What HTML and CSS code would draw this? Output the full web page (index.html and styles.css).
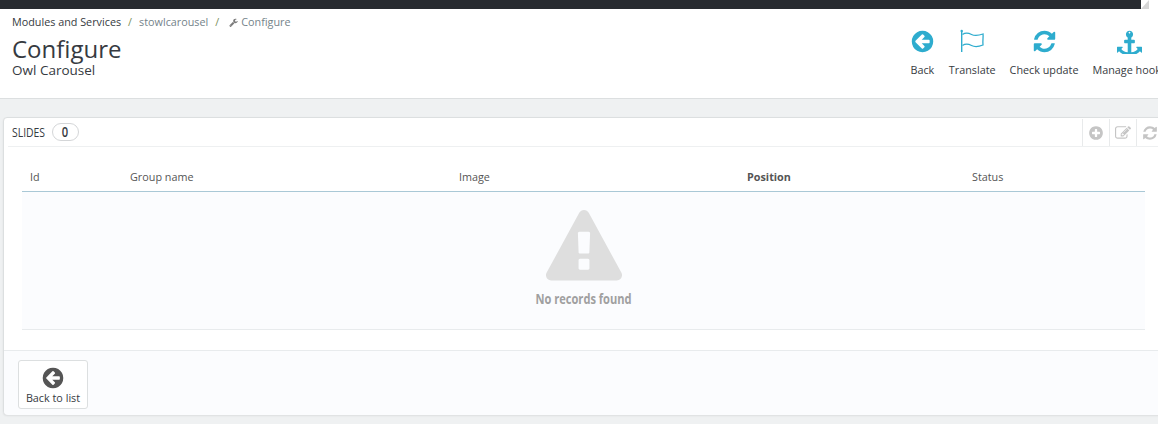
FILE: index.html
```html
<!DOCTYPE html>
<html lang="en">
<head>
<meta charset="utf-8">
<title>Configure</title>
<link rel="stylesheet" href="styles.css">
</head>
<body>
<div class="page">
  <div class="topbar"><div class="topbar-dark"></div><div class="topbar-corner"></div></div>
  <header class="head">
    <div class="head-left">
      <ul class="crumbs">
        <li class="crumb-first">Modules and Services</li>
        <li class="sep">/</li>
        <li>stowlcarousel</li>
        <li class="sep">/</li>
        <li class="crumb-icon"><svg class="wrench" viewBox="0 0 1792 1792"><path d="M448 1472q0-26-19-45t-45-19-45 19-19 45 19 45 45 19 45-19 19-45zm644-420l-682 682q-37 37-90 37-52 0-91-37l-106-108q-38-36-38-90 0-53 38-91l681-681q39 98 114.5 173.5t173.5 114.5zm634-435q0 39-23 106-47 134-164.5 217.5t-258.5 83.5q-185 0-316.5-131.5t-131.5-316.5 131.5-316.5 316.5-131.5q58 0 121.5 16.5t107.5 46.5q16 11 16 28t-16 28l-293 169v224l193 107q5-3 79-48.5t135.5-81 70.5-35.5q15 0 23.5 10t8.5 25z"/></svg>Configure</li>
      </ul>
      <h1 class="title">Configure</h1>
      <h2 class="subtitle">Owl Carousel</h2>
    </div>
    <nav class="actions">
      <a class="action">
        <svg class="action-icon" viewBox="0 0 1792 1792"><path d="M1408 960v-128q0-26-19-45t-45-19h-502l189-189q19-19 19-45t-19-45l-91-91q-18-18-45-18t-45 18l-362 362-91 91q-18 18-18 45t18 45l91 91 362 362q18 18 45 18t45-18l91-91q18-18 18-45t-18-45l-189-189h502q26 0 45-19t19-45zm256-64q0 209-103 385.5t-279.5 279.5-385.5 103-385.5-103-279.5-279.5-103-385.5 103-385.5 279.5-279.5 385.5-103 385.5 103 279.5 279.5 103 385.5z"/></svg>
        <span>Back</span>
      </a>
      <a class="action">
        <svg class="action-icon" viewBox="0 0 25 25"><circle class="flag-knob" cx="1.700" cy="2" r="1.200"/><path class="flag-pole" d="M1.700 2v21"/><path class="flag-cloth" d="M2.500 5.500c3-2 6-1.500 9 0s6 1.500 11.500-.5c.5 3-.5 5.500 0 11-5 2-8.500 2-11.500.5s-6-2-9 0"/></svg>
        <span>Translate</span>
      </a>
      <a class="action">
        <svg class="action-icon" viewBox="0 0 1792 1792"><path d="M1639 1056q0 5-1 7-64 268-268 434.5t-478 166.5q-146 0-282.5-55t-243.5-157l-129 129q-19 19-45 19t-45-19-19-45v-448q0-26 19-45t45-19h448q26 0 45 19t19 45-19 45l-137 137q71 66 161 102t187 36q134 0 250-65t186-179q11-17 53-117 8-23 30-23h192q13 0 22.5 9.5t9.500 22.500zm25-800v448q0 26-19 45t-45 19h-448q-26 0-45-19t-19-45 19-45l138-138q-148-137-349-137-134 0-250 65t-186 179q-11 17-53 117-8 23-30 23h-199q-13 0-22.5-9.5t-9.500-22.500v-7q65-268 270-434.5t480-166.5q146 0 284 55.5t245 156.500l130-129q19-19 45-19t45 19 19 45z"/></svg>
        <span>Check update</span>
      </a>
      <a class="action">
        <svg class="action-icon" viewBox="0 0 1792 1792"><path d="M960 256q0-26-19-45t-45-19-45 19-19 45 19 45 45 19 45-19 19-45zm832 1056v352q0 22-20 30-8 2-12 2-12 0-23-9l-93-93q-119 143-318.5 226.5t-429.5 83.5-429.5-83.5-318.5-226.5l-93 93q-9 9-23 9-4 0-12-2-20-8-20-30v-352q0-14 9-23t23-9h352q22 0 30 20 8 19-7 35l-100 100q67 91 189.5 153.5t271.5 82.5v-647h-192q-26 0-45-19t-19-45v-128q0-26 19-45t45-19h192v-163q-58-34-93-92.5t-35-128.500q0-106 75-181t181-75 181 75 75 181q0 70-35 128.5t-93 92.500v163h192q26 0 45 19t19 45v128q0 26-19 45t-45 19h-192v647q149-20 271.5-82.5t189.5-153.500l-100-100q-15-16-7-35 8-20 30-20h352q14 0 23 9t9 23z"/></svg>
        <span>Manage hooks</span>
      </a>
    </nav>
  </header>

  <main class="content">
    <section class="panel">
      <div class="panel-head">
        <span class="panel-title">SLIDES</span>
        <span class="badge"><span class="badge-num">0</span></span>
        <div class="tools">
          <span class="tool"><svg class="tool-icon" viewBox="0 0 1792 1792"><path d="M1344 960v-128q0-26-19-45t-45-19h-256v-256q0-26-19-45t-45-19h-128q-26 0-45 19t-19 45v256h-256q-26 0-45 19t-19 45v128q0 26 19 45t45 19h256v256q0 26 19 45t45 19h128q26 0 45-19t19-45v-256h256q26 0 45-19t19-45zm320-64q0 209-103 385.5t-279.5 279.5-385.5 103-385.5-103-279.5-279.5-103-385.5 103-385.5 279.5-279.5 385.5-103 385.5 103 279.5 279.5 103 385.5z"/></svg></span>
          <span class="tool"><svg class="tool-icon" viewBox="0 0 1792 1792"><path d="M888 1184l116-116-152-152-116 116v56h96v96h56zm440-720q-16-16-33 1l-350 350q-17 17-1 33t33-1l350-350q17-17 1-33zm80 594v190q0 119-84.5 203.5t-203.5 84.5h-832q-119 0-203.5-84.5t-84.5-203.5v-832q0-119 84.5-203.5t203.5-84.5h832q63 0 117 25 15 7 18 23 3 17-9 29l-49 49q-14 14-32 8-23-6-45-6h-832q-66 0-113 47t-47 113v832q0 66 47 113t113 47h832q66 0 113-47t47-113v-126q0-13 9-22l64-64q15-15 35-7t20 29zm-96-738l288 288-672 672h-288v-288zm444 132l-92 92-288-288 92-92q28-28 68-28t68 28l152 152q28 28 28 68t-28 68z"/></svg></span>
          <span class="tool"><svg class="tool-icon" viewBox="0 0 1792 1792"><path d="M1639 1056q0 5-1 7-64 268-268 434.5t-478 166.5q-146 0-282.5-55t-243.5-157l-129 129q-19 19-45 19t-45-19-19-45v-448q0-26 19-45t45-19h448q26 0 45 19t19 45-19 45l-137 137q71 66 161 102t187 36q134 0 250-65t186-179q11-17 53-117 8-23 30-23h192q13 0 22.5 9.5t9.500 22.500zm25-800v448q0 26-19 45t-45 19h-448q-26 0-45-19t-19-45 19-45l138-138q-148-137-349-137-134 0-250 65t-186 179q-11 17-53 117-8 23-30 23h-199q-13 0-22.5-9.5t-9.500-22.500v-7q65-268 270-434.5t480-166.5q146 0 284 55.5t245 156.500l130-129q19-19 45-19t45 19 19 45z"/></svg></span>
        </div>
      </div>
      <div class="table-wrap">
        <table class="grid">
          <thead>
            <tr>
              <th class="col-id">Id</th>
              <th class="col-group">Group name</th>
              <th class="col-image">Image</th>
              <th class="col-pos">Position</th>
              <th>Status</th>
            </tr>
          </thead>
          <tbody>
            <tr>
              <td colspan="5" class="empty">
                <svg class="empty-icon" viewBox="0 0 1792 1792"><path d="M1024 1375v-190q0-14-9.500-23.500t-22.500-9.500h-192q-13 0-22.500 9.500t-9.500 23.500v190q0 14 9.500 23.500t22.500 9.500h192q13 0 22.500-9.500t9.500-23.500zm-2-374l18-459q0-12-10-19-13-11-24-11h-220q-11 0-24 11-10 7-10 21l17 457q0 10 10 16.500t24 6.500h185q14 0 23.500-6.500t10.500-16.500zm-14-934l768 1408q35 63-2 126-17 29-46.500 46t-63.500 17h-1536q-34 0-63.500-17t-46.500-46q-37-63-2-126l768-1408q17-31 47-49t65-18 65 18 47 49z"/></svg>
                <div class="empty-text">No records found</div>
              </td>
            </tr>
          </tbody>
        </table>
      </div>
      <div class="panel-foot">
        <a class="back-btn">
          <svg class="back-icon" viewBox="0 0 1792 1792"><path d="M1408 960v-128q0-26-19-45t-45-19h-502l189-189q19-19 19-45t-19-45l-91-91q-18-18-45-18t-45 18l-362 362-91 91q-18 18-18 45t18 45l91 91 362 362q18 18 45 18t45-18l91-91q18-18 18-45t-18-45l-189-189h502q26 0 45-19t19-45zm256-64q0 209-103 385.5t-279.5 279.5-385.5 103-385.5-103-279.5-279.5-103-385.5 103-385.5 279.5-279.5 385.5-103 385.5 103 279.5 279.5 103 385.5z"/></svg>
          <span>Back to list</span>
        </a>
      </div>
    </section>
  </main>
</div>
</body>
</html>
```

FILE: styles.css
```css
* { box-sizing: border-box; }
html, body { margin: 0; padding: 0; height: 100%; overflow: hidden; }
body { background: #eff1f2; font-family: "Open Sans", "Liberation Sans", sans-serif; color: #363a41; font-size: 11px; }
.page { width: 1170px; }

.topbar { display: flex; height: 9px; background: #fff; }
.topbar-dark { width: 1141px; background: #282b30; }
.topbar-corner { width: 8px; background: #d6d6d6; clip-path: polygon(0 100%, 100% 0, 100% 100%); }

.head { display: flex; justify-content: space-between; height: 90px; background: #fff; border-bottom: 1px solid #dcdfe0; padding: 0 4px 0 12px; }
.crumbs { display: flex; list-style: none; margin: 6px 0 0; padding: 0; font-size: 10.8px; line-height: 14px; color: #74838a; }
.crumb-first { color: #363a41; }
.sep { margin: 0 7px; color: #7b8f5a; }
.crumb-icon { display: flex; align-items: center; margin-left: 3px; }
.wrench { width: 9px; height: 9px; margin-right: 3px; fill: #7a7a7a; }
.title { margin: 6px 0 0; font-size: 24px; line-height: 28px; font-weight: 400; color: #363a41; }
.subtitle { margin: 0; font-size: 13.5px; line-height: 14px; font-weight: 400; color: #363a41; }

.actions { display: flex; gap: 14px; padding-top: 20px; }
.action { display: flex; flex-direction: column; align-items: center; font-size: 10.8px; line-height: 14px; color: #363a41; }
.action-icon { width: 25px; height: 25px; margin-bottom: 9px; fill: #2eacce; }
.flag-knob { fill: #2eacce; }
.flag-pole { fill: none; stroke: #2eacce; stroke-width: 1.400; }
.flag-cloth { fill: none; stroke: #2eacce; stroke-width: 1.300; }

.content { padding: 18px 0 0 3px; }
.panel { background: #fff; border: 1px solid #dcdfe0; border-radius: 4px; height: 298px; box-shadow: 0 1px 2px rgba(0,0,0,.08); }
.panel-head { display: flex; align-items: center; height: 29px; margin-left: 4px; padding-left: 4px; border-bottom: 1px solid #eef0f1; }
.panel-title { display: inline-block; width: 32px; font-size: 13px; line-height: 18px; color: #363a41; transform: scaleX(.8); transform-origin: left center; }
.badge { display: flex; align-items: center; justify-content: center; width: 27px; height: 18px; margin-left: 8px; border: 1px solid #d4d6d8; border-radius: 9px; }
.badge-num { display: inline-block; font-size: 14px; line-height: 16px; font-weight: 600; color: #363a41; transform: scaleX(.8); }
.tools { display: flex; margin-left: auto; align-self: flex-end; height: 27px; margin-right: 6px; }
.tool { display: flex; align-items: center; justify-content: center; width: 27px; border-left: 1px solid #e8eaeb; }
.tool-icon { width: 16px; height: 16px; fill: #c5c5c5; }

.table-wrap { padding: 16px 19px 0 18px; }
.grid { width: 1123px; table-layout: fixed; border-collapse: collapse; }
.grid th { height: 28px; padding: 0 0 0 8px; text-align: left; font-size: 10.8px; font-weight: 400; color: #555; border-bottom: 1px solid #a9c8d6; }
.col-id { width: 100px; }
.col-group { width: 329px; }
.col-image { width: 288px; }
.col-pos { width: 225px; }
.grid th.col-pos { font-weight: 700; color: #555; }
.empty { height: 138px; padding: 18px 0 0; text-align: center; vertical-align: top; background: #fbfcfe; border-bottom: 1px solid #e8ebed; }
.empty-icon { display: block; width: 76px; height: 76px; margin: 0 auto; fill: #dedede; }
.empty-text { margin-top: 3px; font-size: 15px; line-height: 18px; font-weight: 700; color: #a0a0a0; transform: scaleX(.74); }

.panel-foot { margin-top: 20px; height: 65px; padding: 9px 14px; background: #fbfcfe; border-top: 1px solid #e8ebed; border-radius: 0 0 4px 4px; }
.back-btn { display: flex; flex-direction: column; align-items: center; width: 70px; height: 49px; padding-top: 5px; background: #fff; border: 1px solid #dcdfe0; border-radius: 3px; font-size: 10.8px; line-height: 14px; color: #363a41; }
.back-icon { width: 24px; height: 24px; fill: #555; margin-bottom: 1px; }
```
